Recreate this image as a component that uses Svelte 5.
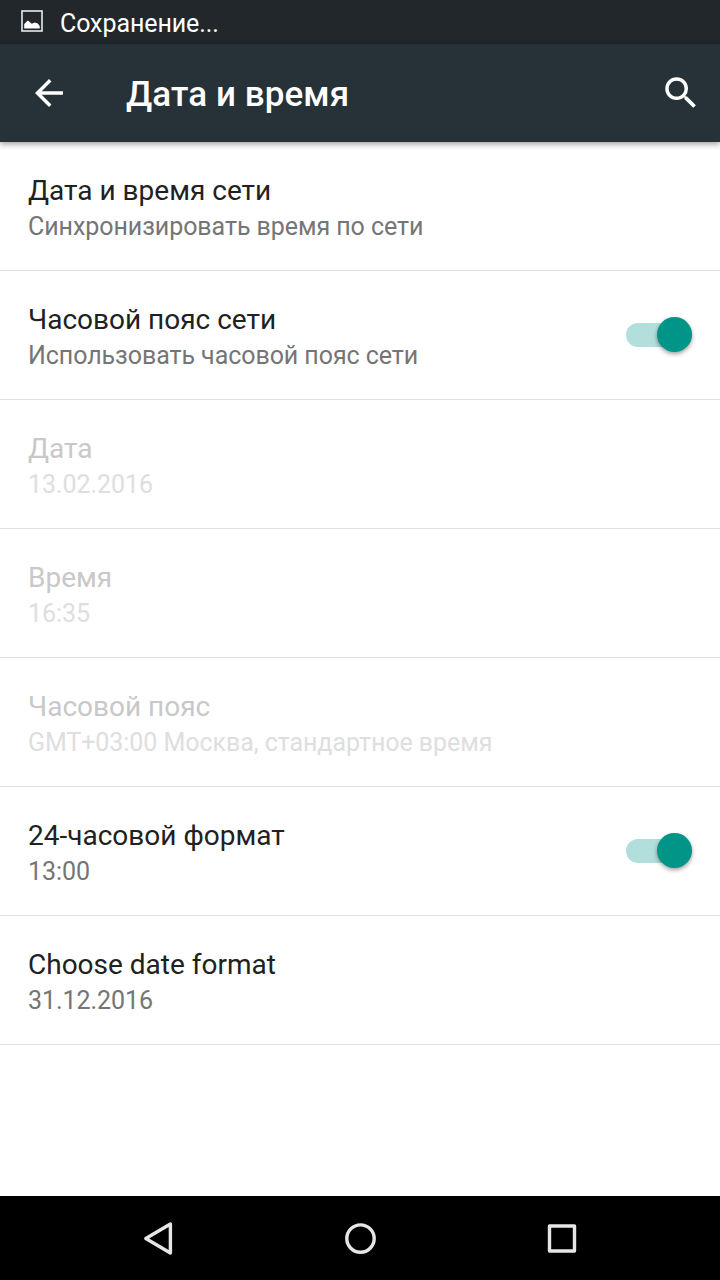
<script lang="ts">
  type Setting = {
    id: string;
    title: string;
    summary: string;
    disabled?: boolean;
    toggle?: boolean;
  };

  let settings: Setting[] = $state([
    {
      id: "auto-time",
      title: "Дата и время сети",
      summary: "Синхронизировать время по сети",
    },
    {
      id: "auto-zone",
      title: "Часовой пояс сети",
      summary: "Использовать часовой пояс сети",
      toggle: true,
    },
    { id: "date", title: "Дата", summary: "13.02.2016", disabled: true },
    { id: "time", title: "Время", summary: "16:35", disabled: true },
    {
      id: "zone",
      title: "Часовой пояс",
      summary: "GMT+03:00 Москва, стандартное время",
      disabled: true,
    },
    {
      id: "24-hour",
      title: "24-часовой формат",
      summary: "13:00",
      toggle: true,
    },
    { id: "date-format", title: "Choose date format", summary: "31.12.2016" },
  ]);

  function handleClick(setting: Setting) {
    if (setting.toggle !== undefined) {
      setting.toggle = !setting.toggle;
    }
  }
</script>

<div class="screen">
  <div class="status-bar">
    <svg class="status-icon" width="22" height="22" viewBox="0 0 22 22">
      <rect x="1" y="1" width="20" height="20" fill="none" stroke="#e9eaea" stroke-width="1.6" />
      <path d="M3.2 18.6V14l3.6-3.4 4 3.2 3-1.4 3 1.2 1.9 2.4v2.6z" fill="#fff" />
    </svg>
    <span class="status-text">Сохранение...</span>
  </div>

  <header class="app-bar">
    <button class="icon-btn" aria-label="Назад">
      <svg width="42" height="42" viewBox="0 0 24 24">
        <path d="M20 11H7.83l5.59-5.59L12 4l-8 8 8 8 1.41-1.41L7.83 13H20v-2z" fill="#fff" />
      </svg>
    </button>
    <h1>Дата и время</h1>
    <button class="icon-btn" aria-label="Поиск">
      <svg width="42" height="42" viewBox="0 0 24 24">
        <path
          d="M15.5 14h-.79l-.28-.27A6.471 6.471 0 0 0 16 9.5 6.5 6.5 0 1 0 9.5 16c1.61 0 3.09-.59 4.23-1.57l.27.28v.79l5 4.99L20.49 19l-4.99-5zm-6 0C7.01 14 5 11.99 5 9.5S7.01 5 9.5 5 14 7.01 14 9.5 11.99 14 9.5 14z"
          fill="#fff"
        />
      </svg>
    </button>
  </header>

  <main>
    {#each settings as setting (setting.id)}
      <button
        class="row"
        disabled={setting.disabled}
        onclick={() => handleClick(setting)}
      >
        <span class="labels">
          <span class="title">{setting.title}</span>
          <span class="summary">{setting.summary}</span>
        </span>
        {#if setting.toggle !== undefined}
          <span class="switch" class:on={setting.toggle}>
            <span class="thumb"></span>
          </span>
        {/if}
      </button>
    {/each}
  </main>

  <nav class="nav-bar">
    <svg width="42" height="42" viewBox="0 0 42 42">
      <path d="M33.4 7v29L8.8 21.5z" />
    </svg>
    <svg width="42" height="42" viewBox="0 0 42 42">
      <circle cx="21.5" cy="21.6" r="13.7" />
    </svg>
    <svg width="42" height="42" viewBox="0 0 42 42">
      <rect x="8.5" y="9" width="25" height="25" />
    </svg>
  </nav>
</div>

<style>
  :global(body) {
    margin: 0;
    background: #fff;
  }

  .screen {
    display: flex;
    flex-direction: column;
    width: 720px;
    height: 1280px;
    overflow: hidden;
    background: #fff;
    font-family: Roboto, "Noto Sans", sans-serif;
  }

  button {
    border: none;
    background: none;
    padding: 0;
    font: inherit;
    color: inherit;
    text-align: left;
  }

  .status-bar {
    display: flex;
    align-items: center;
    height: 44px;
    padding-left: 21px;
    box-sizing: border-box;
    background: #21272b;
    color: #fff;
  }

  .status-icon {
    margin-bottom: 2px;
  }

  .status-text {
    margin-left: 17px;
    padding-top: 3px;
    font-size: 25px;
    line-height: 41px;
    letter-spacing: -0.08px;
  }

  .app-bar {
    display: flex;
    align-items: center;
    height: 98px;
    padding: 0 18px 0 28px;
    box-sizing: border-box;
    background: #263238;
    color: #fff;
    box-shadow: 0 2px 6px rgba(0, 0, 0, 0.4);
  }

  .icon-btn {
    display: flex;
  }

  h1 {
    flex: 1;
    margin: 0 0 0 56px;
    padding-top: 4px;
    font-size: 35px;
    font-weight: 500;
    line-height: 42px;
    letter-spacing: 0.08px;
  }

  main {
    flex: 1;
  }

  .row {
    display: flex;
    align-items: center;
    justify-content: space-between;
    width: 100%;
    height: 129px;
    padding: 0 28px;
    box-sizing: border-box;
    border-bottom: 1px solid #e0e0e0;
  }

  .labels {
    display: flex;
    flex-direction: column;
    padding-top: 4px;
  }

  .title {
    font-size: 28px;
    line-height: 38px;
    color: #212121;
  }

  .summary {
    font-size: 25px;
    line-height: 34px;
    letter-spacing: -0.06px;
    color: #757575;
  }

  .row:disabled .title {
    color: #c8c8c8;
  }

  .row:disabled .summary {
    color: #dedede;
  }

  .switch {
    display: flex;
    align-items: center;
    width: 66px;
    height: 24px;
    border-radius: 12px;
    background: #b9b9b9;
  }

  .thumb {
    width: 35px;
    height: 35px;
    margin-bottom: 1px;
    border-radius: 50%;
    background: #f1f1f1;
    box-shadow: 0 2px 4px rgba(0, 0, 0, 0.38);
  }

  .switch.on {
    justify-content: flex-end;
    background: #b2dfdb;
  }

  .switch.on .thumb {
    background: #009587;
  }

  .nav-bar {
    display: flex;
    align-items: center;
    justify-content: center;
    gap: 160px;
    height: 84px;
    background: #000;
  }

  .nav-bar svg {
    fill: none;
    stroke: #e6e6e6;
    stroke-width: 3.4;
    stroke-linejoin: round;
  }
</style>
